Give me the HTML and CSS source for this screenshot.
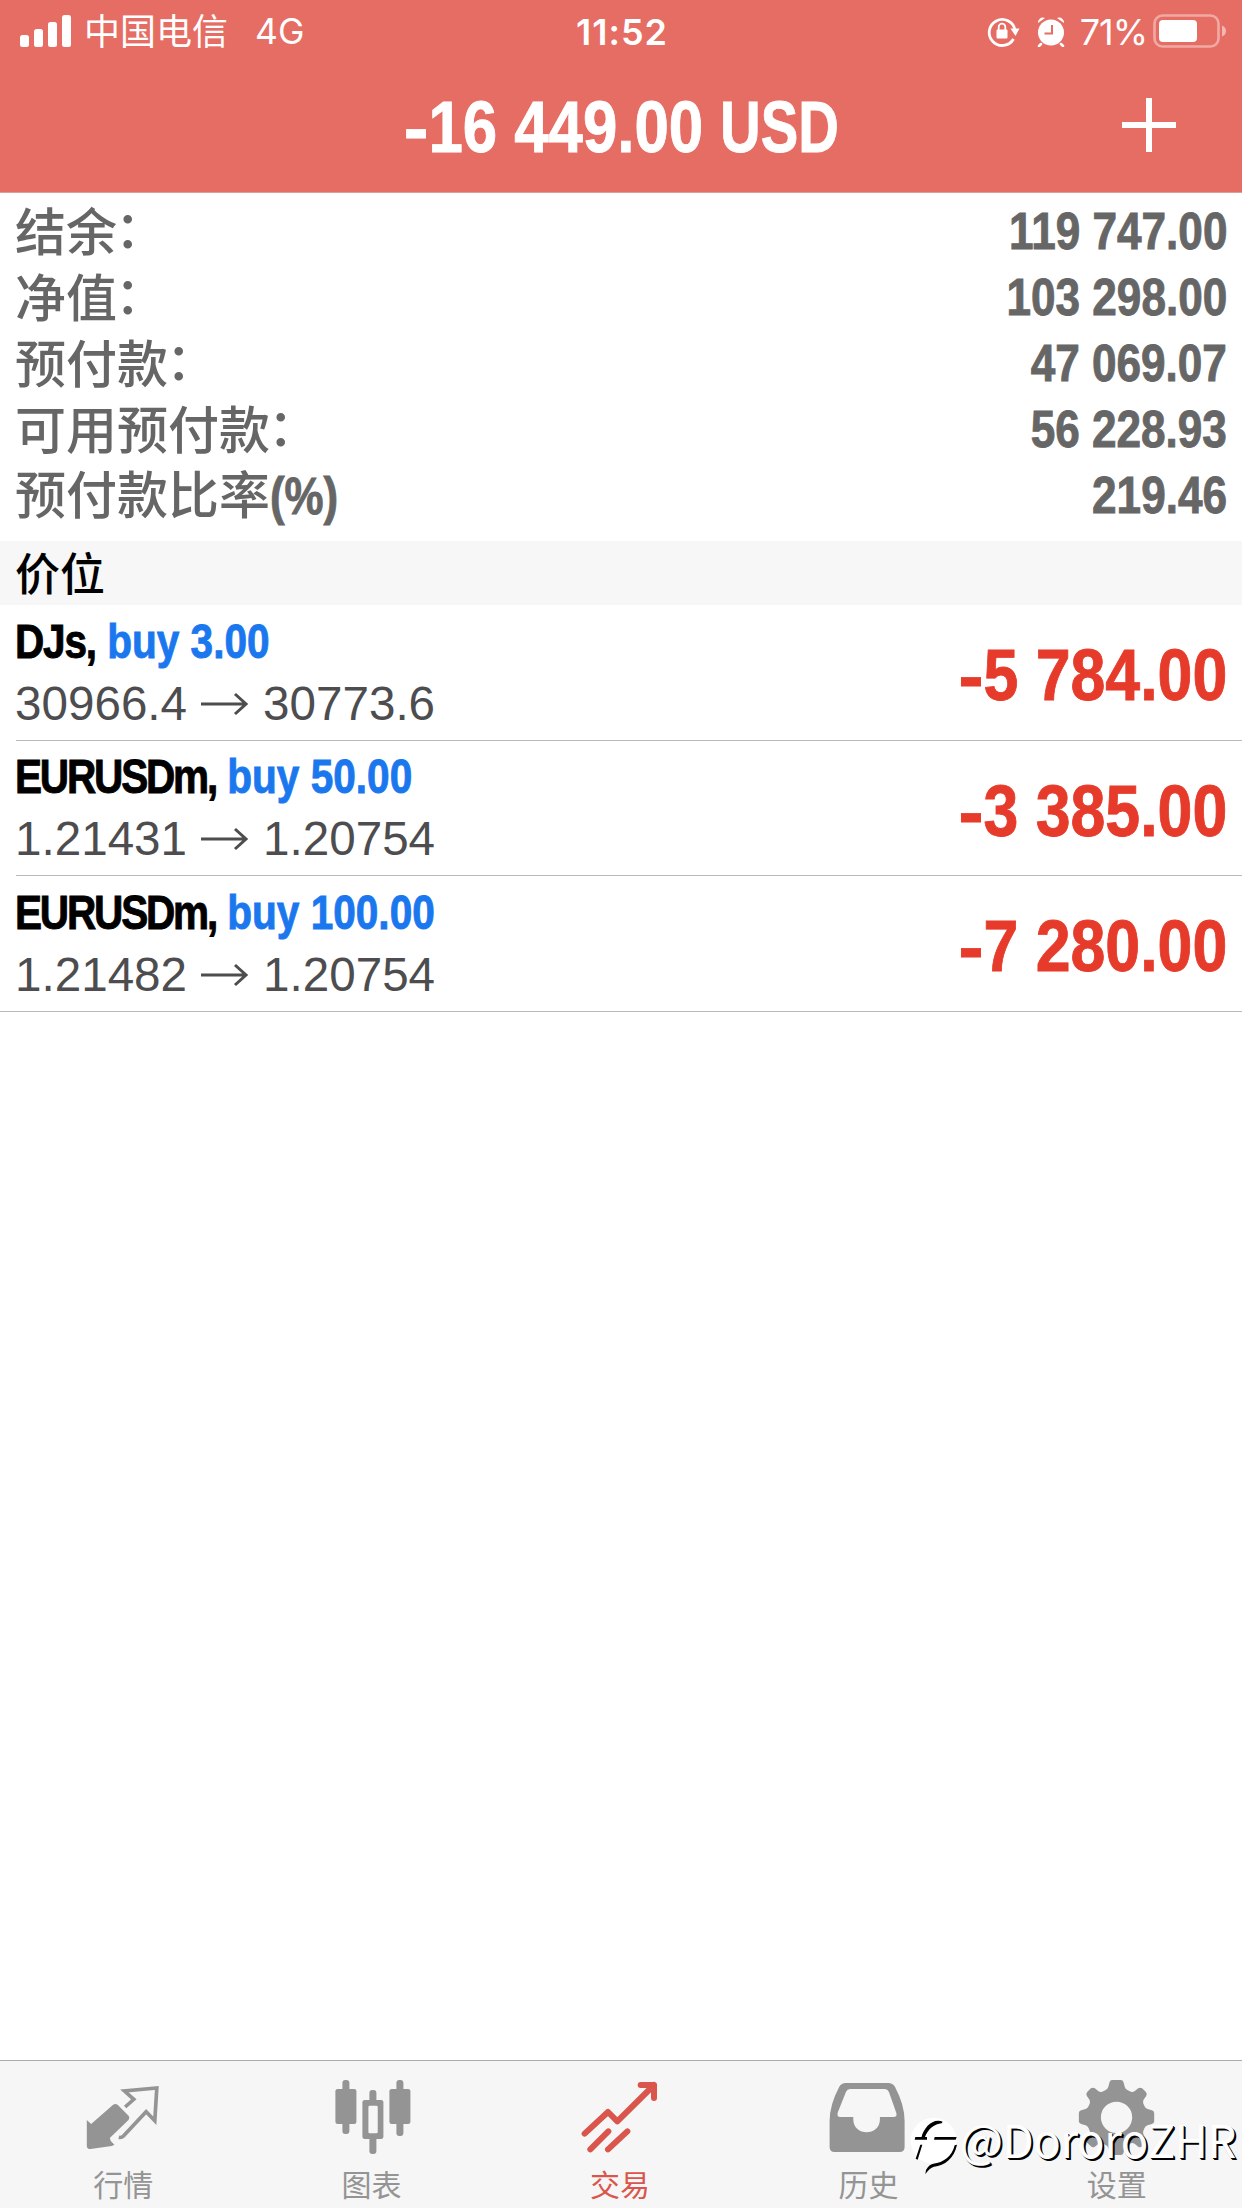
FILE: index.html
```html
<!DOCTYPE html>
<html lang="zh-CN">
<head>
<meta charset="utf-8">
<title>交易</title>
<link rel="stylesheet" href="styles.css">
</head>
<body>
<div class="screen">
  <header class="header">
    <div class="status">
      <div class="status-left">
        <svg class="signal" viewBox="0 0 52 33"><rect x="0" y="20" width="9" height="12" rx="2.5"/><rect x="14" y="14" width="9" height="18" rx="2.5"/><rect x="28" y="7" width="9" height="25" rx="2.5"/><rect x="42" y="0" width="9" height="32" rx="2.5"/></svg>
        <span class="carrier">中国电信</span>
        <span class="network">4G</span>
      </div>
      <span class="clock">11:52</span>
      <div class="status-right">
        <svg class="lock" viewBox="0 0 34 32"><path d="M26.5 23A13 13 0 1 1 28 14" fill="none" stroke="#fff" stroke-width="2.8"/><path d="M23.5 12.500h9l-4 7.500z"/><rect x="9.500" y="13.500" width="11" height="9" rx="1"/><path d="M11.700 14v-3a3.300 3.300 0 0 1 6.600 0v3" fill="none" stroke="#fff" stroke-width="1.800"/></svg>
        <svg class="alarm" viewBox="0 0 28 30"><circle cx="14" cy="15.500" r="13"/><path d="M1 6a5 5 0 0 1 7-5zM27 6a5 5 0 0 0-7-5z"/><path d="M4 27l-2 2M24 27l2 2" stroke="#fff" stroke-width="2.500" stroke-linecap="round"/><path d="M15 8v8.500H7.500" fill="none" stroke="#e66d63" stroke-width="2"/></svg>
        <span class="percent">71%</span>
        <svg class="battery" viewBox="0 0 74 34"><rect x="1.500" y="1.500" width="64" height="31" rx="8" fill="none" stroke="#fff" stroke-opacity=".42" stroke-width="2.600"/><rect x="6" y="6" width="38" height="22" rx="4"/><path d="M69 11.500q4 1.500 4 5.500t-4 5.500z" fill-opacity=".5"/></svg>
      </div>
    </div>
    <div class="titlebar">
      <h1 class="condensed total"><span class="minus">-</span>16 449.00 <span class="currency">USD</span></h1>
      <svg class="plus" viewBox="0 0 54 54"><path d="M27 0v54M0 27h54" stroke="#fff" stroke-width="6"/></svg>
    </div>
  </header>

  <section class="account">
    <div class="line"><span class="label">结余<i class="colon">：</i></span><b class="condensed amount">119 747.00</b></div>
    <div class="line"><span class="label">净值<i class="colon">：</i></span><b class="condensed amount">103 298.00</b></div>
    <div class="line"><span class="label">预付款<i class="colon">：</i></span><b class="condensed amount">47 069.07</b></div>
    <div class="line"><span class="label">可用预付款<i class="colon">：</i></span><b class="condensed amount">56 228.93</b></div>
    <div class="line"><span class="label">预付款比率<b class="condensed unit">(%)</b></span><b class="condensed amount">219.46</b></div>
  </section>

  <h2 class="section-title">价位</h2>

  <section class="positions">
    <div class="position">
      <div>
        <div class="condensed deal"><span class="symbol">DJs,</span> <span class="side">buy 3.00</span></div>
        <div class="quote">30966.4<svg class="arrow" viewBox="0 0 48 24"><path d="M0 12h45M34 2l11 10-11 10"/></svg>30773.6</div>
      </div>
      <div class="condensed profit"><span class="minus">-</span>5 784.00</div>
    </div>
    <div class="position">
      <div>
        <div class="condensed deal"><span class="symbol long">EURUSDm,</span> <span class="side">buy 50.00</span></div>
        <div class="quote">1.21431<svg class="arrow" viewBox="0 0 48 24"><path d="M0 12h45M34 2l11 10-11 10"/></svg>1.20754</div>
      </div>
      <div class="condensed profit"><span class="minus">-</span>3 385.00</div>
    </div>
    <div class="position">
      <div>
        <div class="condensed deal"><span class="symbol long">EURUSDm,</span> <span class="side">buy 100.00</span></div>
        <div class="quote">1.21482<svg class="arrow" viewBox="0 0 48 24"><path d="M0 12h45M34 2l11 10-11 10"/></svg>1.20754</div>
      </div>
      <div class="condensed profit"><span class="minus">-</span>7 280.00</div>
    </div>
  </section>

  <nav class="tabs">
    <div class="tab">
      <svg viewBox="237.6 90 270 270"><path d="M261 240L274 252 340 194Q348 189 355 196L387 228Q391 234 386 240L330 294 333 303 344 314 336 318 272 327Q261 327 261 317Z"/><path d="M376 201L402 178 374 153 471 144 465 242 439 215 371 288Q365 294 357 292" fill="none" stroke="#949494" stroke-width="11"/></svg>
      <span>行情</span>
    </div>
    <div class="tab">
      <svg viewBox="982.8 90 270 270"><rect x="1005" y="147" width="63" height="105" rx="7"/><rect x="1026" y="120" width="21" height="162" rx="9"/><rect x="1167" y="147" width="63" height="105" rx="7"/><rect x="1188" y="120" width="21" height="168" rx="9"/><rect x="1107" y="150" width="21" height="192" rx="9"/><rect x="1086" y="180" width="63" height="117" rx="7"/><rect x="1104" y="197" width="28" height="83" rx="4" fill="#f6f6f6"/></svg>
      <span>图表</span>
    </div>
    <div class="tab active">
      <svg viewBox="468 90 270 270"><path d="M494 281L564 216 592 244 702 135M662 135H702V174M511 328L565 274M564 328L622 274" fill="none" stroke="#da554b" stroke-width="18" stroke-linecap="round" stroke-linejoin="round"/></svg>
      <span>交易</span>
    </div>
    <div class="tab">
      <svg viewBox="73.2 90 270 270"><path fill-rule="evenodd" d="M138 129H266Q279 129 286 140Q315 195 315 242V321Q315 336 300 336H105Q90 336 90 321V242Q90 195 119 140Q126 129 138 129ZM151 147Q143 147 139 156L115 216Q110 231 122 231H161V238C161 290 241 290 241 238V231H281Q294 231 290 218L268 156Q264 147 256 147Z"/></svg>
      <span>历史</span>
    </div>
    <div class="tab">
      <svg viewBox="818.4 90 270 270"><path fill-rule="evenodd" d="M936 120H962Q968 120 970 127L974 142Q976 148 983 151L992 155Q998 157 1004 153L1014 145Q1020 141 1026 145L1037 156Q1042 162 1038 168L1031 178Q1027 184 1029 190L1033 199Q1036 205 1042 207L1055 211Q1062 213 1062 220V244Q1062 250 1055 252L1042 256Q1036 258 1033 264L1029 274Q1027 280 1031 286L1038 297Q1042 303 1037 308L1026 319Q1020 324 1014 320L1004 312Q998 308 992 310L983 314Q976 317 974 323L970 338Q968 345 962 345H936Q930 345 928 338L924 323Q922 317 915 314L906 310Q900 308 894 312L884 320Q878 324 872 319L861 308Q856 303 860 297L867 286Q871 280 869 274L865 264Q862 258 856 256L843 252Q836 250 836 244V220Q836 213 843 211L856 207Q862 205 865 199L869 190Q871 184 867 178L860 168Q856 162 861 156L872 145Q878 141 884 145L894 153Q900 157 906 155L915 151Q922 148 924 142L928 127Q930 120 936 120ZM949 185A47 47 0 1 0 949 279A47 47 0 1 0 949 185Z"/></svg>
      <span>设置</span>
    </div>
  </nav>

  <div class="watermark">
    <svg viewBox="327 225 150 180"><circle cx="401" cy="302" r="69" fill="#fff"/><path d="M364 293C372 262 398 234 428 245L425 250C404 252 384 266 374 293Z"/><path d="M346 291H381V299H344ZM404 291H470L467 299H402Z"/><path d="M361 314H367L353 359 347 356Z"/><path d="M464 316L471 314C462 356 434 376 402 380Q388 384 376 403L378 390Q386 374 400 371C430 368 456 350 464 316Z"/></svg>
    <span>@DororoZHR</span>
  </div>
</div>
</body>
</html>
```
FILE: styles.css
```css
* { box-sizing: border-box; }

body {
  margin: 0;
  background: #fff;
  font-family: "Liberation Sans", "Noto Sans CJK SC", sans-serif;
}

svg { display: block; fill: #fff; flex: none; }

.screen {
  position: relative;
  display: flex;
  flex-direction: column;
  width: 1242px;
  height: 2208px;
  overflow: hidden;
}

/* Bold figures squeezed to a condensed face */
.condensed {
  font-family: "Liberation Sans", sans-serif;
  font-weight: 700;
  white-space: nowrap;
  -webkit-text-stroke: .9px currentColor;
}
.minus {
  display: inline-block;
  transform: scaleX(1.2);
  transform-origin: right;
}

.header {
  height: 193px;
  background: #e66d63;
  border-bottom: 1px solid #d8a09b;
  color: #fff;
}

.status {
  display: grid;
  grid-template-columns: 1fr auto 1fr;
  align-items: center;
  height: 62px;
  padding: 0 15px 0 20px;
  font-family: Inter, "Noto Sans CJK SC", sans-serif;
  font-size: 36px;
}

.status-left, .status-right { display: flex; align-items: center; }
.status-right { justify-content: flex-end; }
.signal { width: 52px; height: 33px; margin-top: -1px; }
.carrier { margin-left: 12px; font-weight: 400; font-size: 36px; line-height: 62px; padding-top: 1px; }
.network { margin-left: 27px; font-size: 35.5px; }
.clock { margin-left: -3px; font-weight: 600; letter-spacing: 1px; }
.lock { width: 34px; height: 32px; margin-right: 16px; }
.alarm { width: 28px; height: 30px; margin-right: 15px; }
.percent { margin-right: 6px; font-size: 36px; letter-spacing: -1px; }
.battery { width: 74px; height: 34px; margin-top: -2px; }

.titlebar {
  display: grid;
  grid-template-columns: 1fr auto 1fr;
  align-items: center;
  height: 130px;
  padding: 0 66px;
}
.total {
  grid-column: 2;
  margin: 0 -3px 0 3px;
  font-size: 72px;
  line-height: 80px;
  transform: scaleX(.858);
}
.currency {
  display: inline-block;
  margin-right: -12px;
  transform: scaleX(.91);
  transform-origin: left;
}
.plus { justify-self: end; width: 54px; height: 54px; margin-top: -4px; }

.account { height: 348px; padding: 5px 15px 0; }
.line {
  display: flex;
  justify-content: space-between;
  align-items: center;
  height: 66px;
  color: #666;
  font-size: 51px;
  line-height: 66px;
}
.label { margin-top: -4px; font-family: "Noto Sans CJK SC", sans-serif; font-weight: 500; }
.colon { display: inline-block; font-style: normal; transform: translate(-2px, -3px); }
.amount { padding-top: 2px; transform: scaleX(.865); transform-origin: right; }
.unit { display: inline-block; transform: scaleX(.86); transform-origin: left; line-height: 60px; }

.section-title {
  height: 64px;
  margin: 0;
  padding-left: 15px;
  background: #f7f7f7;
  color: #000;
  font: 500 45px/62px "Noto Sans CJK SC", sans-serif;
}

.positions { flex: 1; }
.position {
  display: flex;
  justify-content: space-between;
  align-items: center;
  height: 135px;
  margin-left: 16px;
  padding-right: 15px;
  border-bottom: 1px solid #b9b9bc;
}
.position:first-child { height: 136px; }
.position:last-child { height: 136px; margin-left: 0; padding-left: 16px; }
.deal {
  width: 0;
  margin-left: -1px;
  color: #000;
  font-size: 48px;
  line-height: 62px;
  transform: scaleX(.845);
  transform-origin: left;
}
.symbol { letter-spacing: -1.4px; }
.symbol.long { letter-spacing: -2.6px; }
.side { color: #1a77ee; }
.quote {
  display: flex;
  align-items: center;
  margin-left: -1px;
  color: #4d4d4f;
  font-size: 47.6px;
  line-height: 62px;
}
.arrow {
  width: 48px;
  height: 24px;
  margin: 0 14px;
  fill: none;
  stroke: #4d4d4f;
  stroke-width: 3;
}
.profit {
  padding-top: 5px;
  color: #e63b2b;
  font-size: 72px;
  line-height: 80px;
  transform: scaleX(.87);
  transform-origin: right;
}

.tabs {
  display: grid;
  grid-template-columns: repeat(5, 1fr);
  height: 148px;
  border-top: 1px solid #a9aeab;
  background: #f6f6f6;
}
.tab {
  display: flex;
  flex-direction: column;
  align-items: center;
  padding-top: 9px;
  color: #949494;
  font: 400 30px/47px "Noto Sans CJK SC", sans-serif;
}
.tab svg { width: 90px; height: 90px; fill: #949494; }
.tab span { margin-right: 2px; }
.tab.active { color: #da554b; }

/* Author mark printed over the tab bar */
.watermark {
  position: absolute;
  left: 909px;
  top: 2115px;
  display: flex;
  align-items: flex-start;
  color: #fff;
}
.watermark svg { width: 50px; height: 60px; fill: #000; }
.watermark span {
  margin-left: 1px;
  font: 400 45.5px/47px "Noto Sans CJK SC", sans-serif;
  letter-spacing: -.5px;
  text-shadow: 2px 2px 0 #000, 1px 1px 0 #000;
}
```
